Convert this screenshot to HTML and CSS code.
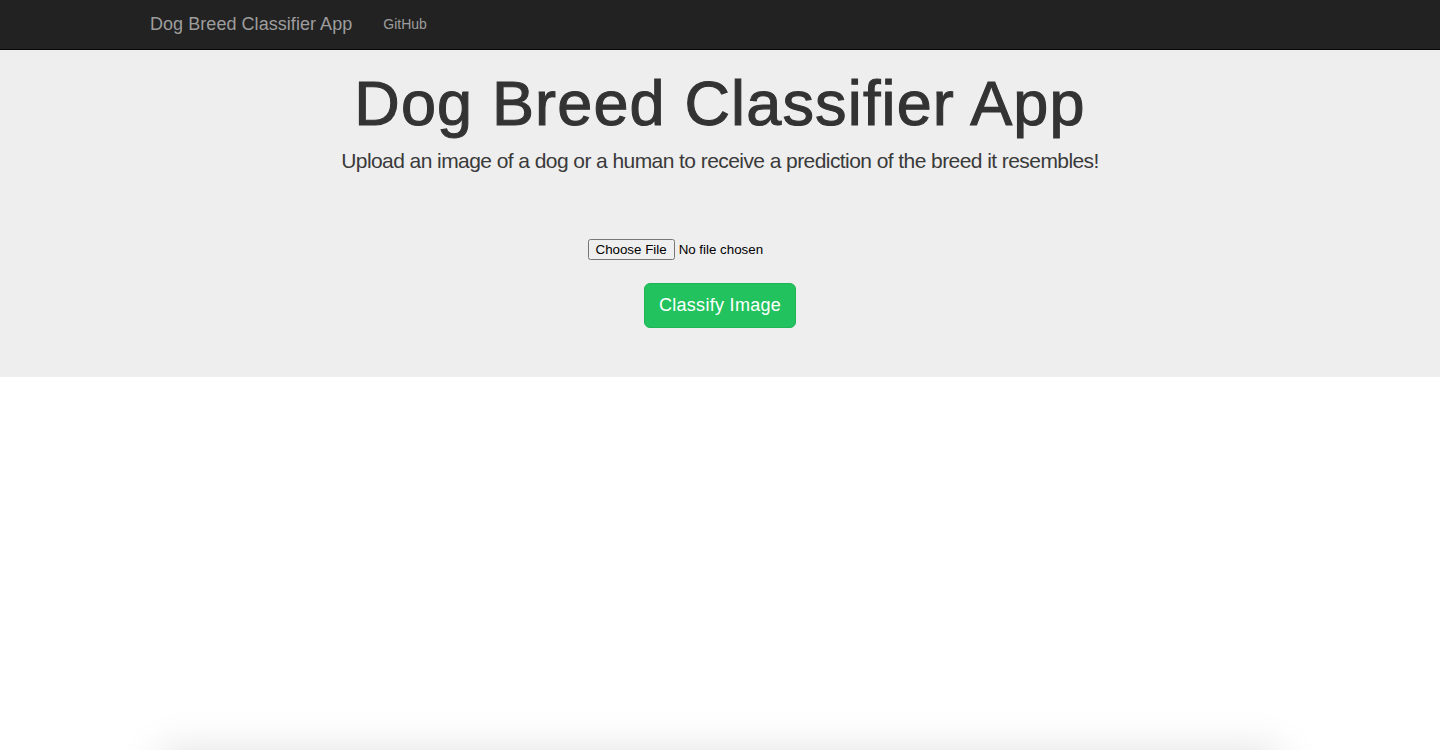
FILE: index.html
```html
<!DOCTYPE html>
<html lang="en">
<head>
<meta charset="utf-8">
<title>Dog Breed Classifier App</title>
<link rel="stylesheet" href="styles.css">
</head>
<body>
<nav class="navbar">
  <div class="container nav-inner">
    <a class="brand" href="#">Dog Breed Classifier App</a>
    <a class="nav-link" href="#">GitHub</a>
  </div>
</nav>
<section class="jumbotron">
  <div class="container hero">
    <h1 class="title">Dog Breed Classifier App</h1>
    <p class="lead">Upload an image of a dog or a human to receive a prediction of the breed it resembles!</p>
    <form class="upload-form">
      <input class="file-input" type="file" name="file">
      <button class="btn-classify" type="button">Classify Image</button>
    </form>
  </div>
</section>
<div class="result-card"></div>
</body>
</html>
```
FILE: styles.css
```css
html, body {
  margin: 0;
  padding: 0;
}
body {
  font-family: "Liberation Sans", Arial, Helvetica, sans-serif;
  font-size: 14px;
  line-height: 1.42857;
  color: #333;
  background: #fff;
}
.container {
  width: 1170px;
  margin: 0 auto;
  padding: 0 15px;
  box-sizing: border-box;
}
.navbar {
  background: #222;
  border-bottom: 1px solid #080808;
  height: 50px;
  box-sizing: border-box;
}
.nav-inner {
  display: flex;
  align-items: center;
  height: 49px;
}
.brand {
  margin-left: -15px;
  padding: 14px 15px 15px;
  font-size: 18px;
  line-height: 20px;
  letter-spacing: 0.05px;
  color: #9d9d9d;
  text-decoration: none;
}
.nav-link {
  padding: 14px 15px 15px 16px;
  font-size: 14px;
  line-height: 20px;
  color: #9d9d9d;
  text-decoration: none;
}
.jumbotron {
  background: #eee;
  padding: 0 0 49px;
}
.hero {
  display: flex;
  flex-direction: column;
  align-items: center;
  text-align: center;
}
.title {
  margin: 19px 0 0;
  font-size: 63px;
  line-height: 69px;
  font-weight: 400;
  letter-spacing: 1.15px;
  color: #333;
  -webkit-text-stroke: 1.1px #333;
}
.lead {
  margin: 8px 0 0;
  font-size: 21px;
  line-height: 30px;
  font-weight: 400;
  letter-spacing: -0.57px;
  color: #3a3a3a;
}
.upload-form {
  margin-top: 63px;
  display: flex;
  flex-direction: column;
  align-items: center;
}
.file-input {
  margin-left: -12px;
  font-family: "Liberation Sans", Arial, sans-serif;
  font-size: 13.33px;
  color: #000;
}
.btn-classify {
  margin-top: 23px;
  width: 152px;
  height: 45px;
  padding: 0;
  white-space: nowrap;
  font-family: "Liberation Sans", Arial, sans-serif;
  font-size: 18px;
  line-height: 1.33;
  letter-spacing: 0.3px;
  color: #fff;
  background: #22c35e;
  border: 1px solid #1fb556;
  border-radius: 6px;
  cursor: pointer;
}
.result-card {
  width: 1120px;
  height: 300px;
  margin: 374px auto 0;
  background: #fff;
  box-shadow: 0 0 40px rgba(0, 0, 0, 0.13);
}
```
